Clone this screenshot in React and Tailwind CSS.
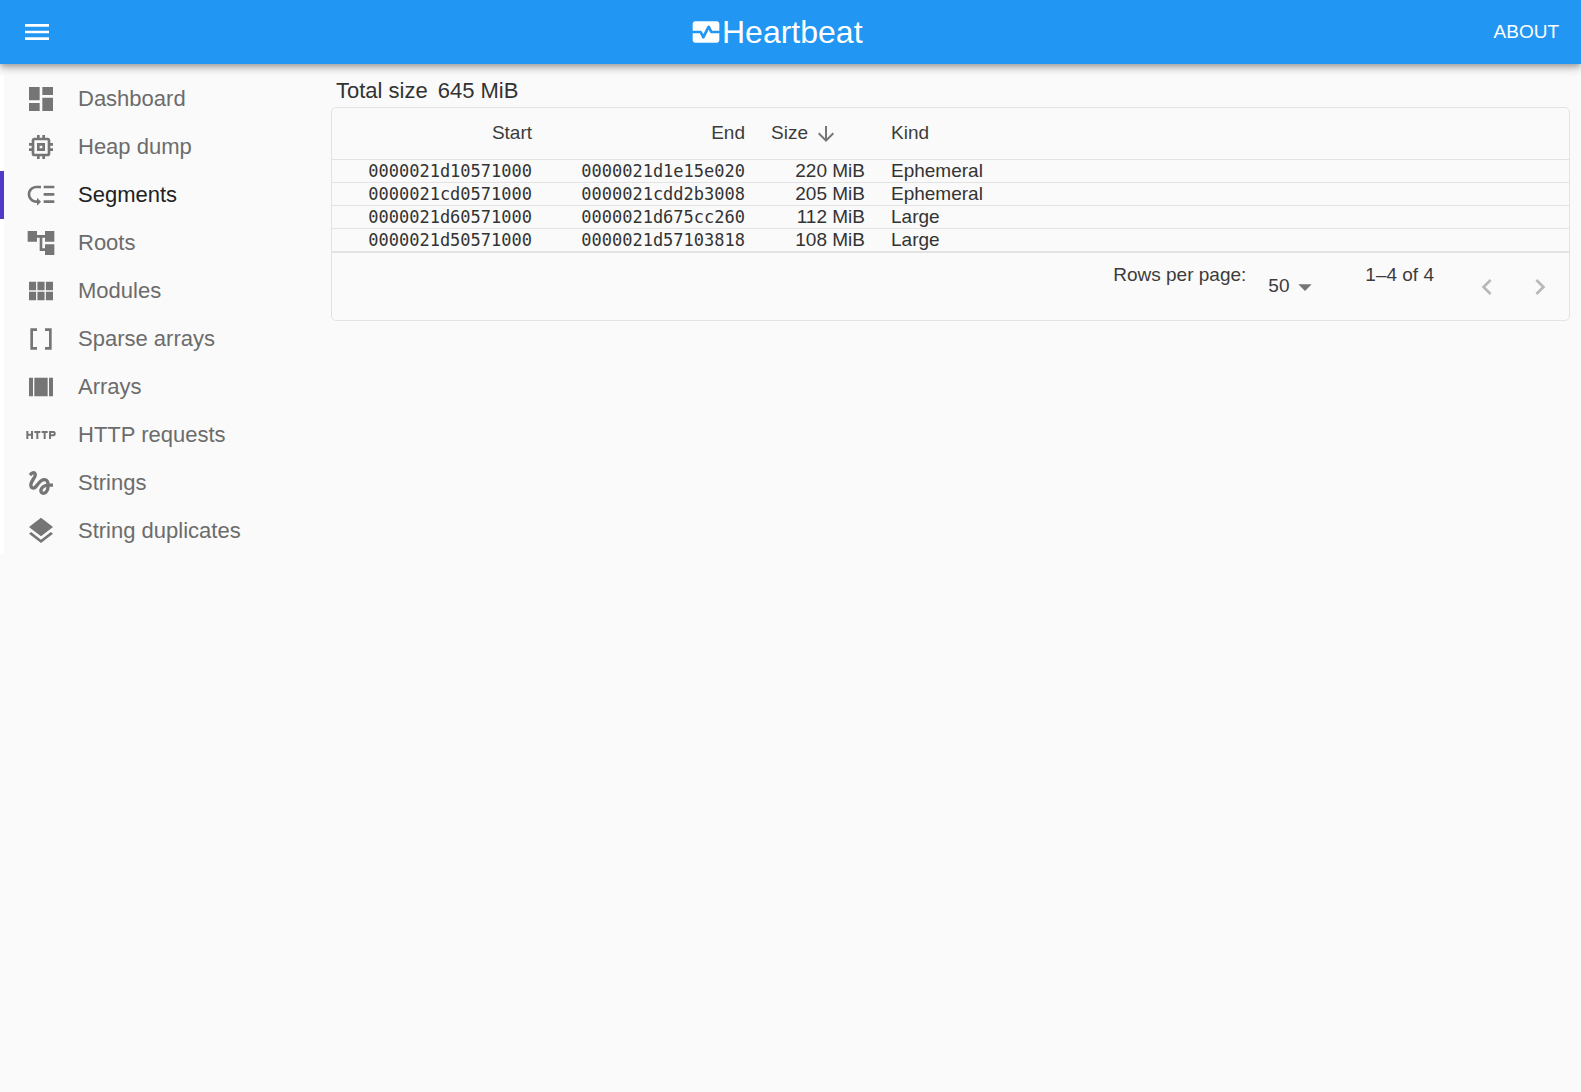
import React from "react";
import {
  MdMenu, MdMonitorHeart, MdDashboard, MdMemory, MdLowPriority, MdAccountTree,
  MdDataArray, MdHttp, MdGesture, MdLayers,
  MdArrowDownward, MdArrowDropDown, MdKeyboardArrowLeft, MdKeyboardArrowRight,
} from "react-icons/md";

function GridIcon({ className }) {
  return (
    <svg viewBox="0 0 24 24" fill="currentColor" className={className} aria-hidden="true">
      <path d="M14.67 5v6.5H9.33V5h5.34zm1 6.5H21V5h-5.33v6.5zm-1 7.5v-6.5H9.33V19h5.34zm1-6.5V19H21v-6.5h-5.33zm-7.34 0H3V19h5.33v-6.5zm0-1V5H3v6.5h5.33z" />
    </svg>
  );
}

function ArrayIcon({ className }) {
  return (
    <svg viewBox="0 0 24 24" fill="currentColor" className={className} aria-hidden="true">
      <path d="M3 5h3v14H3zM18 5h3v14h-3zM7 5h10v14H7z" />
    </svg>
  );
}

const items = [
  ["Dashboard", MdDashboard],
  ["Heap dump", MdMemory],
  ["Segments", MdLowPriority],
  ["Roots", MdAccountTree],
  ["Modules", GridIcon],
  ["Sparse arrays", MdDataArray],
  ["Arrays", ArrayIcon],
  ["HTTP requests", MdHttp],
  ["Strings", MdGesture],
  ["String duplicates", MdLayers],
];

const rows = [
  ["0000021d10571000", "0000021d1e15e020", "220 MiB", "Ephemeral"],
  ["0000021cd0571000", "0000021cdd2b3008", "205 MiB", "Ephemeral"],
  ["0000021d60571000", "0000021d675cc260", "112 MiB", "Large"],
  ["0000021d50571000", "0000021d57103818", "108 MiB", "Large"],
];

function AppBar() {
  return (
    <header className="relative flex h-16 items-center bg-[#2196f3] pr-3 pl-[5px] text-white shadow-[0_3px_5px_-1px_rgba(0,0,0,0.2),0_5px_7px_0_rgba(0,0,0,0.14),0_1px_13px_0_rgba(0,0,0,0.12)]">
      <button type="button" aria-label="Menu" className="flex size-16 items-center justify-center">
        <MdMenu className="size-8" />
      </button>
      <h1 className="flex flex-1 items-center justify-center text-[32px] leading-10">
        <MdMonitorHeart className="size-8" />
        Heartbeat
      </h1>
      <button type="button" className="px-2.5 text-[19px] leading-8">ABOUT</button>
    </header>
  );
}

function Sidebar() {
  return (
    <nav className="w-[331px] shrink-0">
      <ul>
        {items.map(([label, Icon]) => {
          const active = label === "Segments";
          return (
            <li key={label}>
              <a
                href="#"
                aria-current={active ? "page" : undefined}
                className={
                  active
                    ? "flex h-12 items-center gap-[21px] border-l-4 border-[#5138c8] pl-[21px] text-[22px] text-[#212121]"
                    : "flex h-12 items-center gap-[21px] border-l-4 border-white pl-[21px] text-[22px] text-[#6c6c6c]"
                }
              >
                <Icon className="size-8 text-[#757575]" />
                <span className="pb-0.5">{label}</span>
              </a>
            </li>
          );
        })}
      </ul>
    </nav>
  );
}

function SegmentsTable() {
  return (
    <div className="rounded-[5px] border border-[#e3e3e3]">
      <table className="w-full table-fixed border-separate border-spacing-0 text-[19px]">
        <colgroup>
          <col className="w-[214px]" />
          <col className="w-[213px]" />
          <col className="w-[120px]" />
          <col />
        </colgroup>
        <thead>
          <tr className="h-[52px] text-[#3c3c3c]">
            <th scope="col" className="border-b border-[#e3e3e3] px-3.5 py-0 text-right font-normal">Start</th>
            <th scope="col" className="border-b border-[#e3e3e3] px-3.5 py-0 text-right font-normal">End</th>
            <th scope="col" aria-sort="descending" className="border-b border-[#e3e3e3] px-3 py-0 font-normal">
              <button type="button" className="flex items-center gap-1.5">
                Size
                <MdArrowDownward className="size-6 text-[#757575]" />
              </button>
            </th>
            <th scope="col" className="border-b border-[#e3e3e3] px-3 py-0 text-left font-normal">Kind</th>
          </tr>
        </thead>
        <tbody className="text-[#333333]">
          {rows.map(([start, end, size, kind]) => (
            <tr key={start} className="leading-[22px]">
              <td className="border-b border-[#e3e3e3] px-3.5 py-0 text-right font-['DejaVu_Sans_Mono',monospace] text-[17px]">{start}</td>
              <td className="border-b border-[#e3e3e3] px-3.5 py-0 text-right font-['DejaVu_Sans_Mono',monospace] text-[17px]">{end}</td>
              <td className="border-b border-[#e3e3e3] px-3.5 py-0 text-right">{size}</td>
              <td className="border-b border-[#e3e3e3] px-3 py-0 text-left">{kind}</td>
            </tr>
          ))}
        </tbody>
      </table>
      <div className="flex h-[68px] items-center justify-end border-t border-[#e3e3e3] pr-[3px] text-[19px] text-[#3c3c3c]">
        <label htmlFor="page-size" className="mr-[22px] mb-[22px]">Rows per page:</label>
        <div className="mr-11 flex items-center">
          <select id="page-size" defaultValue="50" className="w-[53px] appearance-none bg-transparent">
            <option>10</option>
            <option>25</option>
            <option>50</option>
          </select>
          <MdArrowDropDown className="pointer-events-none -ml-8 size-8 text-[#757575]" />
        </div>
        <p className="mr-[26px] mb-[22px]">1–4 of 4</p>
        <button type="button" disabled aria-label="Previous page" className="flex size-[53px] items-center justify-center text-[#b8b8b8]">
          <MdKeyboardArrowLeft className="size-8" />
        </button>
        <button type="button" disabled aria-label="Next page" className="flex size-[53px] items-center justify-center text-[#b8b8b8]">
          <MdKeyboardArrowRight className="size-8" />
        </button>
      </div>
    </div>
  );
}

export default function App() {
  return (
    <div className="min-h-screen bg-[#fafafa] font-['Liberation_Sans',Arial,sans-serif]">
      <AppBar />
      <div className="flex pt-[11px]">
        <Sidebar />
        <main className="min-w-0 flex-1 pr-[11px]">
          <p className="flex gap-2.5 pl-[5px] text-[22px] leading-8 text-[#333333]">
            <span>Total size</span>
            <span>645 MiB</span>
          </p>
          <SegmentsTable />
        </main>
      </div>
    </div>
  );
}
